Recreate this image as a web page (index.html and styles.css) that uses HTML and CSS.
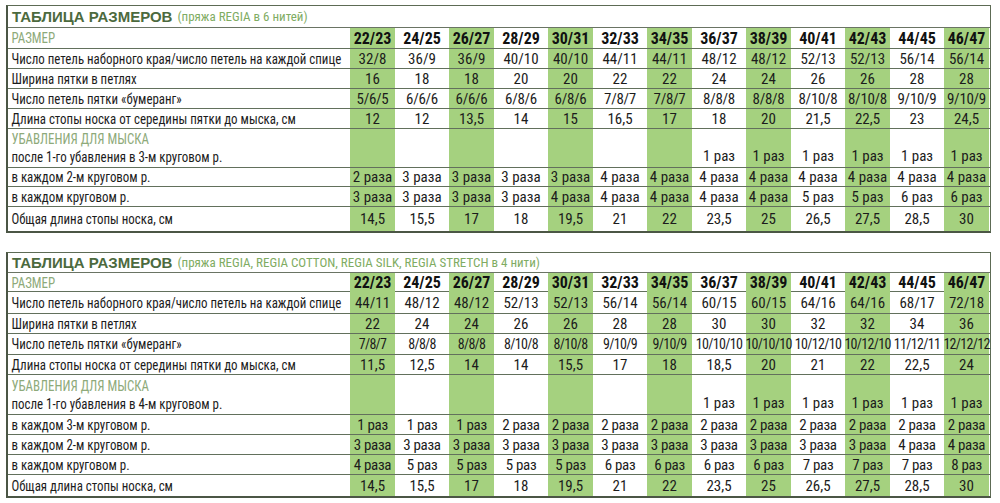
FILE: index.html
```html
<!DOCTYPE html>
<html lang="ru">
<head>
<meta charset="utf-8">
<title>Таблица размеров</title>
<link rel="stylesheet" href="styles.css">
</head>
<body>
<div class="page">
  <div class="sheet s1">
    <div class="title"><span class="t-main">ТАБЛИЦА РАЗМЕРОВ</span> <span class="t-sub">(пряжа REGIA в 6 нитей)</span></div>
    <div class="row h21"><div class="lbl muted">РАЗМЕР</div><div class="c b g">22/23</div><div class="c b">24/25</div><div class="c b g">26/27</div><div class="c b">28/29</div><div class="c b g">30/31</div><div class="c b">32/33</div><div class="c b g">34/35</div><div class="c b">36/37</div><div class="c b g">38/39</div><div class="c b">40/41</div><div class="c b g">42/43</div><div class="c b">44/45</div><div class="c b g">46/47</div></div>
    <div class="row h20"><div class="lbl">Число петель наборного края/число петель на каждой спице</div><div class="c g">32/8</div><div class="c">36/9</div><div class="c g">36/9</div><div class="c">40/10</div><div class="c g">40/10</div><div class="c">44/11</div><div class="c g">44/11</div><div class="c">48/12</div><div class="c g">48/12</div><div class="c">52/13</div><div class="c g">52/13</div><div class="c">56/14</div><div class="c g">56/14</div></div>
    <div class="row h20"><div class="lbl">Ширина пятки в петлях</div><div class="c g">16</div><div class="c">18</div><div class="c g">18</div><div class="c">20</div><div class="c g">20</div><div class="c">22</div><div class="c g">22</div><div class="c">24</div><div class="c g">24</div><div class="c">26</div><div class="c g">26</div><div class="c">28</div><div class="c g">28</div></div>
    <div class="row h20 tight"><div class="lbl">Число петель пятки «бумеранг»</div><div class="c g">5/6/5</div><div class="c">6/6/6</div><div class="c g">6/6/6</div><div class="c">6/8/6</div><div class="c g">6/8/6</div><div class="c">7/8/7</div><div class="c g">7/8/7</div><div class="c">8/8/8</div><div class="c g">8/8/8</div><div class="c">8/10/8</div><div class="c g">8/10/8</div><div class="c">9/10/9</div><div class="c g">9/10/9</div></div>
    <div class="row h20"><div class="lbl">Длина стопы носка от середины пятки до мыска, см</div><div class="c g">12</div><div class="c">12</div><div class="c g">13,5</div><div class="c">14</div><div class="c g">15</div><div class="c">16,5</div><div class="c g">17</div><div class="c">18</div><div class="c g">20</div><div class="c">21,5</div><div class="c g">22,5</div><div class="c">23</div><div class="c g">24,5</div></div>
    <div class="row h39 dec"><div class="lbl two"><span class="muted">УБАВЛЕНИЯ ДЛЯ МЫСКА</span><span>после 1-го убавления в 3-м круговом р.</span></div><div class="c g"></div><div class="c"></div><div class="c g"></div><div class="c"></div><div class="c g"></div><div class="c"></div><div class="c g"></div><div class="c">1 раз</div><div class="c g">1 раз</div><div class="c">1 раз</div><div class="c g">1 раз</div><div class="c">1 раз</div><div class="c g">1 раз</div></div>
    <div class="row h19"><div class="lbl">в каждом 2-м круговом р.</div><div class="c g">2 раза</div><div class="c">3 раза</div><div class="c g">3 раза</div><div class="c">3 раза</div><div class="c g">3 раза</div><div class="c">4 раза</div><div class="c g">4 раза</div><div class="c">4 раза</div><div class="c g">4 раза</div><div class="c">4 раза</div><div class="c g">4 раза</div><div class="c">4 раза</div><div class="c g">4 раза</div></div>
    <div class="row h20"><div class="lbl">в каждом круговом р.</div><div class="c g">3 раза</div><div class="c">3 раза</div><div class="c g">3 раза</div><div class="c">3 раза</div><div class="c g">4 раза</div><div class="c">4 раза</div><div class="c g">4 раза</div><div class="c">4 раза</div><div class="c g">4 раза</div><div class="c">5 раз</div><div class="c g">5 раз</div><div class="c">6 раз</div><div class="c g">6 раз</div></div>
    <div class="row h24 last"><div class="lbl">Общая длина стопы носка, см</div><div class="c g">14,5</div><div class="c">15,5</div><div class="c g">17</div><div class="c">18</div><div class="c g">19,5</div><div class="c">21</div><div class="c g">22</div><div class="c">23,5</div><div class="c g">25</div><div class="c">26,5</div><div class="c g">27,5</div><div class="c">28,5</div><div class="c g">30</div></div>
  </div>

  <div class="sheet s2">
    <div class="title"><span class="t-main">ТАБЛИЦА РАЗМЕРОВ</span> <span class="t-sub">(пряжа REGIA, REGIA COTTON, REGIA SILK, REGIA STRETCH в 4 нити)</span></div>
    <div class="row h19"><div class="lbl muted">РАЗМЕР</div><div class="c b g">22/23</div><div class="c b">24/25</div><div class="c b g">26/27</div><div class="c b">28/29</div><div class="c b g">30/31</div><div class="c b">32/33</div><div class="c b g">34/35</div><div class="c b">36/37</div><div class="c b g">38/39</div><div class="c b">40/41</div><div class="c b g">42/43</div><div class="c b">44/45</div><div class="c b g">46/47</div></div>
    <div class="row h22"><div class="lbl">Число петель наборного края/число петель на каждой спице</div><div class="c g">44/11</div><div class="c">48/12</div><div class="c g">48/12</div><div class="c">52/13</div><div class="c g">52/13</div><div class="c">56/14</div><div class="c g">56/14</div><div class="c">60/15</div><div class="c g">60/15</div><div class="c">64/16</div><div class="c g">64/16</div><div class="c">68/17</div><div class="c g">72/18</div></div>
    <div class="row h20"><div class="lbl">Ширина пятки в петлях</div><div class="c g">22</div><div class="c">24</div><div class="c g">24</div><div class="c">26</div><div class="c g">26</div><div class="c">28</div><div class="c g">28</div><div class="c">30</div><div class="c g">30</div><div class="c">32</div><div class="c g">32</div><div class="c">34</div><div class="c g">36</div></div>
    <div class="row h21 tighter"><div class="lbl">Число петель пятки «бумеранг»</div><div class="c g">7/8/7</div><div class="c">8/8/8</div><div class="c g">8/8/8</div><div class="c">8/10/8</div><div class="c g">8/10/8</div><div class="c">9/10/9</div><div class="c g">9/10/9</div><div class="c">10/10/10</div><div class="c g">10/10/10</div><div class="c">10/12/10</div><div class="c g">10/12/10</div><div class="c">11/12/11</div><div class="c g">12/12/12</div></div>
    <div class="row h20"><div class="lbl">Длина стопы носка от середины пятки до мыска, см</div><div class="c g">11,5</div><div class="c">12,5</div><div class="c g">14</div><div class="c">14</div><div class="c g">15,5</div><div class="c">17</div><div class="c g">18</div><div class="c">18,5</div><div class="c g">20</div><div class="c">21</div><div class="c g">22</div><div class="c">22,5</div><div class="c g">24</div></div>
    <div class="row h40 dec"><div class="lbl two"><span class="muted">УБАВЛЕНИЯ ДЛЯ МЫСКА</span><span>после 1-го убавления в 4-м круговом р.</span></div><div class="c g"></div><div class="c"></div><div class="c g"></div><div class="c"></div><div class="c g"></div><div class="c"></div><div class="c g"></div><div class="c">1 раз</div><div class="c g">1 раз</div><div class="c">1 раз</div><div class="c g">1 раз</div><div class="c">1 раз</div><div class="c g">1 раз</div></div>
    <div class="row h20 tight"><div class="lbl">в каждом 3-м круговом р.</div><div class="c g">1 раз</div><div class="c">1 раз</div><div class="c g">1 раз</div><div class="c">2 раза</div><div class="c g">2 раза</div><div class="c">2 раза</div><div class="c g">2 раза</div><div class="c">2 раза</div><div class="c g">2 раза</div><div class="c">2 раза</div><div class="c g">2 раза</div><div class="c">2 раза</div><div class="c g">2 раза</div></div>
    <div class="row h20 tight"><div class="lbl">в каждом 2-м круговом р.</div><div class="c g">3 раза</div><div class="c">3 раза</div><div class="c g">3 раза</div><div class="c">3 раза</div><div class="c g">3 раза</div><div class="c">3 раза</div><div class="c g">3 раза</div><div class="c">3 раза</div><div class="c g">3 раза</div><div class="c">3 раза</div><div class="c g">3 раза</div><div class="c">4 раза</div><div class="c g">4 раза</div></div>
    <div class="row h20 tight"><div class="lbl">в каждом круговом р.</div><div class="c g">4 раза</div><div class="c">5 раз</div><div class="c g">5 раз</div><div class="c">5 раз</div><div class="c g">5 раз</div><div class="c">6 раз</div><div class="c g">6 раз</div><div class="c">6 раз</div><div class="c g">6 раз</div><div class="c">7 раз</div><div class="c g">7 раз</div><div class="c">7 раз</div><div class="c g">8 раз</div></div>
    <div class="row h21 last"><div class="lbl">Общая длина стопы носка, см</div><div class="c g">14,5</div><div class="c">15,5</div><div class="c g">17</div><div class="c">18</div><div class="c g">19,5</div><div class="c">21</div><div class="c g">22</div><div class="c">23,5</div><div class="c g">25</div><div class="c">26,5</div><div class="c g">27,5</div><div class="c">28,5</div><div class="c g">30</div></div>
  </div>
</div>
</body>
</html>
```

FILE: styles.css
```css
html, body {
  margin: 0;
  padding: 0;
  background: #ffffff;
}

.page {
  padding: 5px 0 0 6px;
  display: flex;
  flex-direction: column;
  gap: 19px;
  font-family: "Liberation Sans Narrow", "Roboto Condensed", "DejaVu Sans Condensed", "Liberation Sans", sans-serif;
  font-stretch: condensed;
  color: #1c1c1c;
}

.sheet {
  width: 985px;
  box-sizing: border-box;
  border: 1px solid #5d6b55;
  border-left: 2px solid #4b5645;
  border-bottom: 2px solid #4b5645;
}

.title {
  height: 22px;
  box-sizing: border-box;
  border-bottom: 1px solid #6a7464;
  display: flex;
  align-items: center;
  gap: 5px;
  padding-left: 4px;
  white-space: nowrap;
}

.s2 .title {
  height: 20px;
}

.t-main {
  font-family: "Liberation Sans", Arial, sans-serif;
  font-stretch: normal;
  font-weight: bold;
  font-size: 15px;
  color: #4c6a3e;
}

.t-sub {
  font-size: 13px;
  color: #7fac63;
}

.row {
  display: grid;
  grid-template-columns: 342px 45px 54px 45px 54px 45px 54px 45px 54px 45px 54px 45px 54px 45px;
  box-sizing: border-box;
  border-bottom: 1px solid #62705c;
}

.row.last {
  border-bottom: none;
}

.h19 { height: 19px; }
.h20 { height: 20px; }
.h21 { height: 21px; }
.h22 { height: 22px; }
.h24 { height: 24px; }
.h39 { height: 39px; }
.h40 { height: 40px; }

.lbl {
  display: flex;
  align-items: center;
  padding-left: 4px;
  font-size: 15px;
  white-space: nowrap;
  transform: scaleX(0.86);
  transform-origin: left center;
}

.lbl.two {
  flex-direction: column;
  align-items: flex-start;
  justify-content: center;
  line-height: 18px;
}

.muted {
  color: #8eaa7a;
}

.c {
  display: flex;
  align-items: center;
  justify-content: center;
  font-size: 15px;
  white-space: nowrap;
}

.tight .c {
  letter-spacing: -0.3px;
}

.tighter .c {
  font-size: 14px;
  letter-spacing: -0.7px;
}

.dec .c {
  align-items: flex-end;
  padding-bottom: 2px;
}

.c.b {
  font-weight: bold;
  font-size: 16px;
  color: #111111;
}

.g {
  background: #a5d17f;
}
```
